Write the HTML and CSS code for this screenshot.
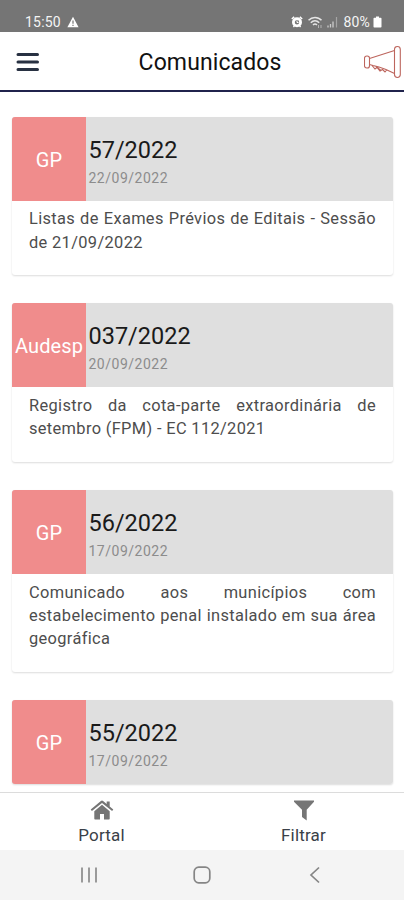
FILE: index.html
```html
<!DOCTYPE html>
<html lang="pt-BR">
<head>
    <meta charset="UTF-8">
    <meta name="viewport" content="width=device-width, initial-scale=1.0">
    <title>Comunicados</title>
    <link rel="stylesheet" href="styles.css">
</head>
<body>
    <div class="status-bar">
        <div class="status-left">
            <span>15:50</span>
            <svg width="12" height="12" viewBox="0 0 12 12"><path d="M6 .8 11.6 11.2H.4z" fill="#fff"/><path d="M6 4.5v3.2M6 8.7v1.2" stroke="#757575" stroke-width="1.2"/></svg>
        </div>
        <div class="status-right">
            <svg width="12" height="12" viewBox="0 0 12 12"><path d="M.8 3 3.2.9M11.2 3 8.8.9M2.400 11l1-1M9.600 11l-1-1" stroke="#fff" stroke-width="1.500"/><circle cx="6" cy="6.300" r="3.600" fill="none" stroke="#fff" stroke-width="2.800"/><path d="M6 4.500v2h1.500" stroke="#fff" fill="none"/></svg>
            <svg class="wifi" width="16" height="13" viewBox="0 0 16 13"><path d="M.5 4.300c3.600-3.900 9.400-3.900 13 0M2.800 6.700c2.600-2.600 5.800-2.600 8.400 0M5 9c1.300-1.300 2.700-1.300 4 0" fill="none" stroke="#e6e6e6" stroke-width="1.500"/><path d="M10.500 9v3M13 9v3" stroke="#b4b4b4"/></svg>
            <svg class="signal" width="11" height="12" viewBox="0 0 11 12"><path d="M1 9.500V11.500M3.500 8v3.500M6 5.500v6" stroke="#ccc" stroke-width="1.300"/><path d="M9.500 1v10.500" stroke="#a5a5a5" stroke-width="1.200"/></svg>
            <span class="percent">80%</span>
            <svg width="9" height="12" viewBox="0 0 9 12"><path d="M3 .5h3v1.300h1.700q.8 0 .8.800v8.100q0 .8-.8.800H1.300q-.8 0-.8-.8V2.600q0-.8.8-.8H3z" fill="#fff"/></svg>
        </div>
    </div>

    <header class="header">
        <svg class="menu" width="23" height="20" viewBox="0 0 23 20"><path d="M2 2.500h19.500M2 10h19.500M2 17.500h19.500" stroke="#283142" stroke-width="3" stroke-linecap="round"/></svg>
        <h1>Comunicados</h1>
        <svg class="megaphone" width="39" height="34" viewBox="0 0 39 34" fill="none" stroke="#bd655d" stroke-width="1.100"><rect x="30.500" y="1.500" width="5.800" height="31" rx="2.900"/><rect x="0.500" y="11" width="5" height="12" rx="2.300"/><path d="M5.500 13.500 30.500 5.500M5.500 19.500l3.500 1M22 24.500l8.500 4M8 20.500l3 3.500 2-1.500 3 3.500 2.500-1.500 2.500 2.500 2-2.500M9 20.500l6 1.500 7 2.500M12 21.500l5 4"/></svg>
    </header>

    <main class="list">
        <article class="card">
            <div class="card-header">
                <div class="badge">GP</div>
                <div class="card-info">
                    <h2>57/2022</h2>
                    <time>22/09/2022</time>
                </div>
            </div>
            <p>Listas de Exames Prévios de Editais - Sessão de 21/09/2022</p>
        </article>
        <article class="card">
            <div class="card-header">
                <div class="badge">Audesp</div>
                <div class="card-info">
                    <h2>037/2022</h2>
                    <time>20/09/2022</time>
                </div>
            </div>
            <p>Registro da cota-parte extraordinária de setembro (FPM) - EC 112/2021</p>
        </article>
        <article class="card">
            <div class="card-header">
                <div class="badge">GP</div>
                <div class="card-info">
                    <h2>56/2022</h2>
                    <time>17/09/2022</time>
                </div>
            </div>
            <p>Comunicado aos municípios com estabelecimento penal instalado em sua área geográfica</p>
        </article>
        <article class="card">
            <div class="card-header">
                <div class="badge">GP</div>
                <div class="card-info">
                    <h2>55/2022</h2>
                    <time>17/09/2022</time>
                </div>
            </div>
        </article>
    </main>

    <nav class="tabs">
        <a class="tab">
            <svg width="24" height="20" viewBox="0 0 24 20" fill="#757575"><path d="M12 4.800 4.300 11.200v7.600q0 .7.700.700h5v-5.500h4v5.500h5q.700 0 .700-.700v-7.600z"/><path d="M12 .5q.6 0 1.100.4l3.600 3V1.500h3v4.900l3.600 3-1.200 1.500L12 2.900 1.900 10.900.7 9.400 10.900.9Q11.400.5 12 .5z"/></svg>
            <span>Portal</span>
        </a>
        <a class="tab">
            <svg width="22" height="21" viewBox="0 0 22 21"><path d="M1 .5h20v1.300l-7.300 8v10.700L9 17V9.800L1 1.800z" fill="#757575"/></svg>
            <span>Filtrar</span>
        </a>
    </nav>

    <div class="system-nav">
        <svg width="18" height="18" viewBox="0 0 18 18"><path d="M2 1.500v15M9 1.500v15M16 1.500v15" stroke="#8a8a8a" stroke-width="1.700"/></svg>
        <svg width="18" height="18" viewBox="0 0 18 18"><rect x="1.200" y="1.200" width="15.600" height="15.600" rx="4.500" fill="none" stroke="#858585" stroke-width="1.700"/></svg>
        <svg width="18" height="18" viewBox="0 0 18 18"><path d="M13 1.500 5 9l8 7.500" fill="none" stroke="#858585" stroke-width="1.700"/></svg>
    </div>
</body>
</html>
```
FILE: styles.css
```css
* {
    box-sizing: border-box;
}

body {
    font-family: Roboto, 'Liberation Sans', sans-serif;
    margin: 0;
    height: 900px;
    display: flex;
    flex-direction: column;
    background: #fff;
    color: #222;
    overflow: hidden;
}

svg {
    display: block;
    flex: none;
}

.status-bar {
    flex: none;
    height: 32px;
    padding: 11px 22px 0 25px;
    display: flex;
    justify-content: space-between;
    background: #757575;
    color: #f4f4f4;
    font-size: 14px;
    line-height: 22px;
}

.status-left,
.status-right {
    display: flex;
    align-items: center;
    height: 22px;
}

.status-left {
    gap: 6px;
    letter-spacing: 0.2px;
}

.wifi {
    margin-left: 5px;
}

.signal {
    margin: 0 5px 0 3px;
}

.percent {
    margin-right: 3px;
    letter-spacing: 0.2px;
}

.header {
    flex: none;
    height: 60px;
    padding: 1px 1px 0 16px;
    display: flex;
    align-items: center;
    justify-content: space-between;
    border-bottom: 2px solid #20234c;
}

.header h1 {
    margin: 1px 0 0 17px;
    font-size: 23px;
    font-weight: 400;
    letter-spacing: 0.1px;
    color: #111;
}

.list {
    flex: 1;
    min-height: 0;
    padding: 24.5px 11px 0 12px;
    overflow: hidden;
}

.card {
    margin-bottom: 28px;
    border-radius: 3px;
    box-shadow: 0 1px 2px rgba(0, 0, 0, 0.14);
    overflow: hidden;
}

.card-header {
    display: flex;
    height: 84px;
    background: #dfdfdf;
}

.badge {
    width: 74px;
    display: flex;
    align-items: center;
    justify-content: center;
    background: #f08c8c;
    color: #fff;
    font-size: 20px;
    padding-top: 2px;
    letter-spacing: 0.1px;
}

.card-info {
    padding: 18px 0 0 2.5px;
}

.card-info h2 {
    margin: 0;
    font-size: 23.5px;
    line-height: 30px;
    font-weight: 400;
    letter-spacing: 0;
    color: #1a1a1a;
}

.card-info time {
    display: block;
    font-size: 14px;
    line-height: 27px;
    letter-spacing: 0.5px;
    color: #8c8c8c;
}

.card p {
    margin: 0;
    padding: 6.6px 17px 21.3px;
    font-size: 16.4px;
    line-height: 23.4px;
    letter-spacing: 0.35px;
    text-align: justify;
    color: #4d4d4d;
}

.tabs {
    flex: none;
    height: 58px;
    display: flex;
    border-top: 1px solid #dcdcdc;
    background: #fff;
}

.tab {
    flex: 1;
    display: flex;
    flex-direction: column;
    align-items: center;
    padding: 7px 0 0 1px;
    font-size: 17px;
    letter-spacing: 0.2px;
    color: #3a3f48;
}

.tab span {
    margin-top: auto;
    line-height: 29px;
}

.system-nav {
    flex: none;
    height: 50px;
    padding: 0 80px;
    display: flex;
    align-items: center;
    justify-content: space-between;
    background: #f4f4f4;
}
```
